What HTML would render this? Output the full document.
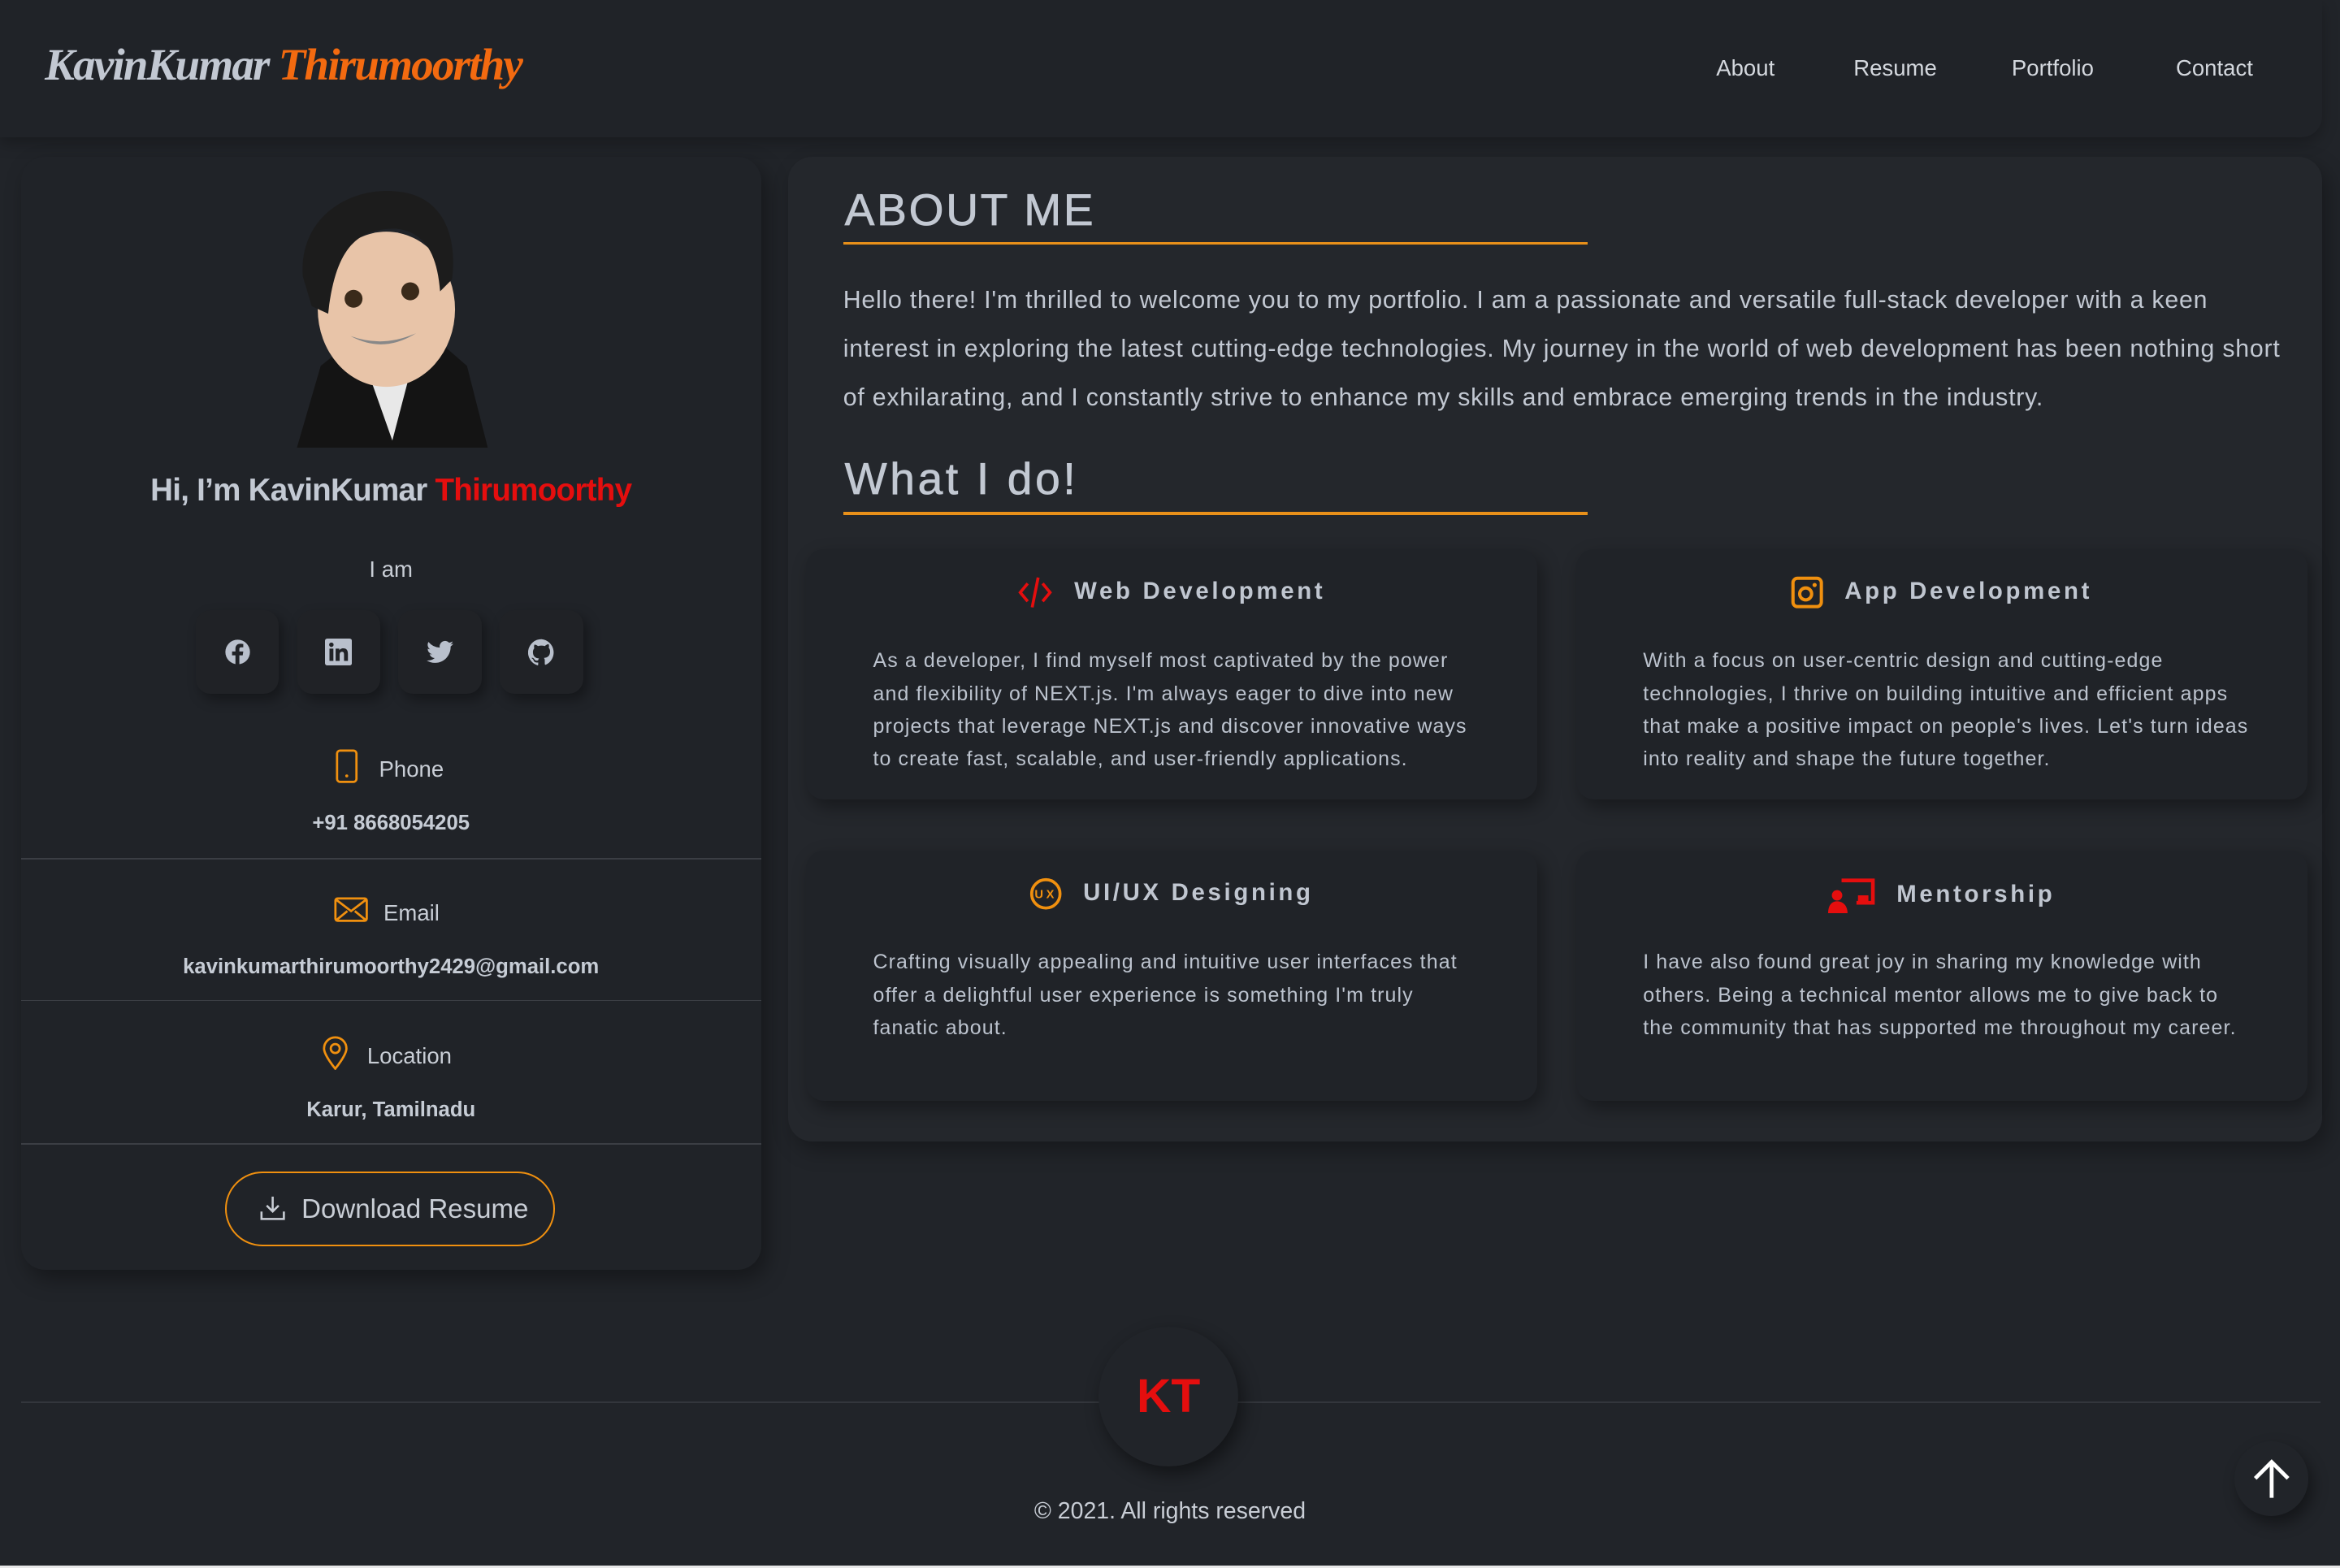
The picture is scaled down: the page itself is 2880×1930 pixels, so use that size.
<!DOCTYPE html>
<html><head><meta charset="utf-8"><style>
*{margin:0;padding:0;box-sizing:border-box}
html,body{width:2880px;height:1930px;overflow:hidden;background:#212429}
#r{zoom:1.83673;width:1568px;height:1051px;position:relative;font-family:"Liberation Sans",sans-serif;color:#bcc3ce}
.a{position:absolute}
.hdr{left:0;top:0;width:1556px;height:92px;background:#202328;border-radius:0 0 14px 0;box-shadow:0 4px 10px rgba(0,0,0,.25)}
.logo{left:30px;top:26px;font-family:"Liberation Serif",serif;font-style:italic;font-weight:bold;font-size:30px;color:#c2c8d2;letter-spacing:-1px}
.logo span{color:#f36a10}
.nav{top:37px;font-size:15px;color:#d4d8de}
.left{left:14px;top:105px;width:496px;height:746px;background:#202328;border-radius:16px;box-shadow:4px 6px 14px rgba(0,0,0,.35)}
.right{left:528px;top:105px;width:1028px;height:660px;background:#24272c;border-radius:16px;box-shadow:4px 6px 14px rgba(0,0,0,.3)}
.c{text-align:center;width:496px;left:14px}
.soc{width:56px;height:56px;background:#202226;border-radius:10px;box-shadow:3px 4px 8px rgba(0,0,0,.35);display:flex;align-items:center;justify-content:center}
.div{left:14px;width:496px;height:1px;background:#3b3e44}
.lbl{font-size:15px;color:#c9ced6}
.val{font-size:14px;font-weight:bold;color:#c6ccd5}
.h2{font-size:30px;color:#c2c8d2;letter-spacing:1.5px;left:566px;-webkit-text-stroke:.4px #c2c8d2}
.ul{left:565px;width:499px;height:2px;background:#e8901a}
.p{left:565px;top:185px;width:968px;font-size:16.5px;line-height:32.7px;color:#c2c8d2;letter-spacing:.42px}
.card{width:490px;height:168px;background:#202328;border-radius:12px;box-shadow:3px 5px 12px rgba(0,0,0,.35)}
.ct{position:absolute;top:18px;left:0;width:100%;text-align:center;font-weight:bold;font-size:16px;letter-spacing:2px;color:#c0c6d0}
.ct svg{vertical-align:middle;margin-right:14px}
.cb{position:absolute;left:45px;top:64px;width:410px;font-size:13.6px;line-height:21.8px;color:#bcc3ce;letter-spacing:.6px}
</style></head><body><div id="r">
<div class="a hdr"></div>
<div class="a logo">KavinKumar <span>Thirumoorthy</span></div>
<div class="a nav" style="left:1150px">About</div>
<div class="a nav" style="left:1242px">Resume</div>
<div class="a nav" style="left:1348px">Portfolio</div>
<div class="a nav" style="left:1458px">Contact</div>

<div class="a left"></div>
<svg class="a" style="left:195px;top:125px" width="132" height="175" viewBox="0 0 132 175">
<path d="M4 175 L20 120 L45 100 L95 100 L118 120 L132 175Z" fill="#141414"/>
<path d="M45 105 L68 170 L85 105Z" fill="#e8e8e8"/>
<ellipse cx="64" cy="82" rx="46" ry="52" fill="#e8c4a8"/>
<path d="M8 60 C5 20 40 0 70 3 C100 5 112 30 108 62 L100 70 C98 45 90 30 70 28 C45 28 30 40 25 85 L14 80Z" fill="#1c1c1c"/>
<circle cx="42" cy="75" r="6" fill="#3a2a1a"/><circle cx="80" cy="70" r="6" fill="#3a2a1a"/>
<path d="M40 100 Q62 112 84 98 Q62 108 40 100Z" fill="#888"/>
</svg>
<div class="a c" style="top:317px;font-size:21px;font-weight:bold;color:#c3c9d3;letter-spacing:-.4px">Hi, I’m KavinKumar <span style="color:#e50e0e">Thirumoorthy</span></div>
<div class="a c" style="top:373px;font-size:15px;color:#c9ced6">I am</div>
<div class="a soc" style="left:131px;top:409px"><svg width="18" height="18" viewBox="0 0 24 24"><circle cx="12" cy="12" r="11" fill="#b9c0cc"/><path d="M13.5 24V15h3l.5-3.5h-3.5V9.5c0-1 .4-1.7 1.8-1.7H17V4.8c-.4 0-1.5-.2-2.7-.2-2.6 0-4.3 1.6-4.3 4.5v2.4H7V15h3v9z" fill="#202226"/></svg></div>
<div class="a soc" style="left:199px;top:409px"><svg width="18" height="18" viewBox="0 0 24 24"><rect width="24" height="24" rx="2" fill="#b9c0cc"/><path d="M4 9h3.5v11H4zM5.7 3.5a2 2 0 110 4 2 2 0 010-4zM9.5 9h3.3v1.5c.5-.9 1.7-1.8 3.4-1.8 3.6 0 4.3 2.3 4.3 5.4V20h-3.5v-5.3c0-1.3 0-2.9-1.8-2.9s-2.1 1.4-2.1 2.8V20H9.5z" fill="#202226"/></svg></div>
<div class="a soc" style="left:267px;top:409px"><svg width="18" height="16" viewBox="0 0 24 20"><path d="M24 2.4a10 10 0 01-2.8.8A4.9 4.9 0 0023.3.4a9.8 9.8 0 01-3.1 1.2A4.9 4.9 0 0011.8 6 14 14 0 011.7.9a4.9 4.9 0 001.5 6.6 4.900 4.900 0 01-2.2-.6A4.9 4.9 0 004.9 11.8a4.9 4.9 0 01-2.2.1 4.900 4.900 0 004.6 3.4A9.900 9.900 0 010 17.400 14 14 0 007.500 19.6c9 0 14-7.500 14-14v-.6A10 10 0 0024 2.4z" fill="#b9c0cc"/></svg></div>
<div class="a soc" style="left:335px;top:409px"><svg width="18" height="18" viewBox="0 0 24 24"><path d="M12 .5a12 12 0 00-3.8 23.4c.6.1.8-.3.8-.6v-2c-3.3.7-4-1.6-4-1.6-.6-1.4-1.4-1.8-1.4-1.8-1-.7.1-.7.1-.7 1.200.1 1.800 1.200 1.800 1.200 1.100 1.800 2.800 1.300 3.500 1 .1-.8.400-1.300.800-1.600-2.700-.3-5.500-1.300-5.500-5.900 0-1.300.5-2.400 1.200-3.200-.1-.3-.5-1.500.1-3.200 0 0 1-.3 3.300 1.200a11.500 11.500 0 016 0C17.300 4.700 18.300 5 18.300 5c.7 1.700.2 2.900.1 3.200.8.8 1.200 1.900 1.200 3.200 0 4.600-2.800 5.600-5.500 5.900.4.400.8 1.100.8 2.200v3.300c0 .3.200.7.800.6A12 12 0 0012 .5z" fill="#b9c0cc"/></svg></div>

<svg class="a" style="left:225px;top:502px" width="15" height="23" viewBox="0 0 15 23"><rect x="1" y="1" width="13" height="21" rx="2" fill="none" stroke="#f0900f" stroke-width="1.5"/><circle cx="7.5" cy="18" r="1" fill="#f0900f"/></svg>
<div class="a lbl" style="left:254px;top:507px">Phone</div>
<div class="a c val" style="top:544px">+91 8668054205</div>
<div class="a div" style="top:575px"></div>
<svg class="a" style="left:224px;top:601px" width="23" height="17" viewBox="0 0 23 17"><rect x="1" y="1" width="21" height="15" rx="1.5" fill="none" stroke="#f0900f" stroke-width="1.5"/><path d="M1 1.5l10.5 8 10.5-8M1 16l8-6.5M22 16l-8-6.5" fill="none" stroke="#f0900f" stroke-width="1.5"/></svg>
<div class="a lbl" style="left:257px;top:603px">Email</div>
<div class="a c val" style="top:640px">kavinkumarthirumoorthy2429@gmail.com</div>
<div class="a div" style="top:670px"></div>
<svg class="a" style="left:216px;top:694px" width="17" height="23" viewBox="0 0 17 23"><path d="M8.5 22C8.5 22 1 13 1 8.5a7.5 7.5 0 0115 0C16 13 8.5 22 8.5 22z" fill="none" stroke="#f0900f" stroke-width="1.5"/><circle cx="8.5" cy="8.5" r="3" fill="none" stroke="#f0900f" stroke-width="1.5"/></svg>
<div class="a lbl" style="left:246px;top:699px">Location</div>
<div class="a c val" style="top:736px">Karur, Tamilnadu</div>
<div class="a div" style="top:766px"></div>
<div class="a" style="left:151px;top:785px;width:221px;height:50px;border:1.5px solid #f0900f;border-radius:25px;font-size:18px;color:#c9ced6;padding:14px 0 0 50px">Download Resume</div>
<svg class="a" style="left:174px;top:801px" width="17" height="17" viewBox="0 0 17 17"><path d="M8.5 1v10M4.5 7l4 4 4-4M1 11v5h15v-5" fill="none" stroke="#c9ced6" stroke-width="1.4"/></svg>

<div class="a right"></div>
<div class="a h2" style="top:123px">ABOUT ME</div>
<div class="a ul" style="top:162px"></div>
<div class="a p">Hello there! I'm thrilled to welcome you to my portfolio. I am a passionate and versatile full-stack developer with a keen interest in exploring the latest cutting-edge technologies. My journey in the world of web development has been nothing short of exhilarating, and I constantly strive to enhance my skills and embrace emerging trends in the industry.</div>
<div class="a h2" style="top:303px;letter-spacing:2px">What I do!</div>
<div class="a ul" style="top:343px"></div>

<div class="a card" style="left:540px;top:368px"><div class="ct"><svg width="24" height="22" viewBox="0 0 24 22"><path d="M7 5L2 11l5 6M17 5l5 6-5 6M14 1L10 21" fill="none" stroke="#e50e0e" stroke-width="2"/></svg>Web Development</div>
<div class="cb">As a developer, I find myself most captivated by the power and flexibility of NEXT.js. I'm always eager to dive into new projects that leverage NEXT.js and discover innovative ways to create fast, scalable, and user-friendly applications.</div></div>
<div class="a card" style="left:1056px;top:368px"><div class="ct"><svg width="22" height="22" viewBox="0 0 22 22"><rect x="1.5" y="1.5" width="19" height="19" rx="3" fill="none" stroke="#f0900f" stroke-width="2.2"/><circle cx="10" cy="12" r="4" fill="none" stroke="#f0900f" stroke-width="2.2"/><circle cx="16" cy="6" r="1.4" fill="#f0900f"/></svg>App Development</div>
<div class="cb">With a focus on user-centric design and cutting-edge technologies, I thrive on building intuitive and efficient apps that make a positive impact on people's lives. Let's turn ideas into reality and shape the future together.</div></div>
<div class="a card" style="left:540px;top:570px"><div class="ct"><svg width="22" height="22" viewBox="0 0 22 22"><circle cx="11" cy="11" r="9.5" fill="none" stroke="#f0900f" stroke-width="2"/><text x="11" y="14" font-size="8" font-weight="bold" fill="#f0900f" text-anchor="middle" font-family="Liberation Sans">UX</text></svg>UI/UX Designing</div>
<div class="cb">Crafting visually appealing and intuitive user interfaces that offer a delightful user experience is something I'm truly fanatic about.</div></div>
<div class="a card" style="left:1056px;top:570px"><div class="ct"><svg width="32" height="24" viewBox="0 0 32 24"><path d="M9 2h21v15H19" fill="none" stroke="#e50e0e" stroke-width="2.5"/><rect x="20" y="12" width="7" height="4" fill="#e50e0e"/><circle cx="6" cy="12" r="3.5" fill="#e50e0e"/><path d="M0 24c0-6 3-8 6-8s7 2 7 8z" fill="#e50e0e"/></svg>Mentorship</div>
<div class="cb">I have also found great joy in sharing my knowledge with others. Being a technical mentor allows me to give back to the community that has supported me throughout my career.</div></div>

<div class="a" style="left:14px;top:939px;width:1541px;height:1px;background:#33363c"></div>
<div class="a" style="left:736px;top:889px;width:94px;height:94px;border-radius:50%;background:#212429;box-shadow:3px 5px 12px rgba(0,0,0,.45);text-align:center;font-size:32px;font-weight:bold;color:#e50e0e;line-height:94px">KT</div>
<div class="a" style="left:0;width:1568px;text-align:center;top:1004px;font-size:15.5px;color:#c9ced6">© 2021. All rights reserved</div>
<div class="a" style="left:1497px;top:966px;width:50px;height:50px;border-radius:50%;background:#212429;box-shadow:3px 5px 10px rgba(0,0,0,.4)"></div>
<svg class="a" style="left:1509px;top:977px" width="26" height="28" viewBox="0 0 26 28"><path d="M13 27V3M2 14L13 3l11 11" fill="none" stroke="#fff" stroke-width="2.6"/></svg>
<div class="a" style="left:0;top:1049px;width:1568px;height:2px;background:#e8e8e8"></div>
</div></body></html>
